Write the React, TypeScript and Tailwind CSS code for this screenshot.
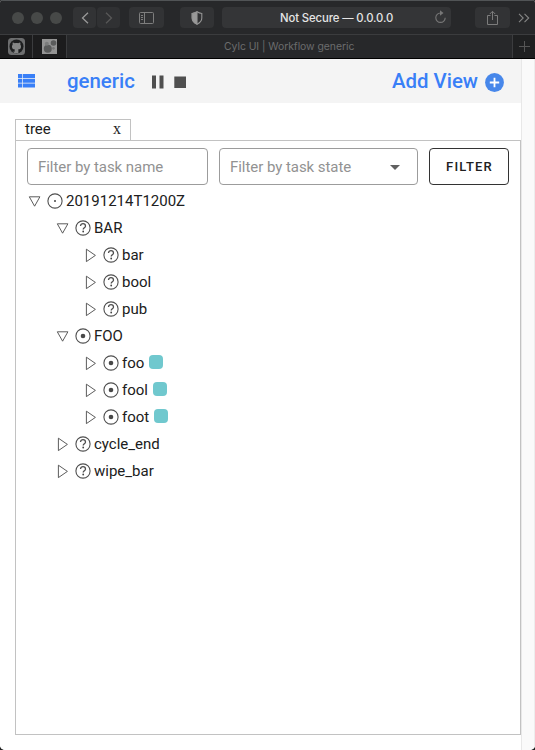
import React from "react";

type Status = "waiting" | "unknown" | "active";

interface TreeNode {
  label: string;
  status: Status;
  depth: number;
  open?: boolean;
  job?: boolean;
}

const nodes: TreeNode[] = [
  { label: "20191214T1200Z", status: "waiting", depth: 0, open: true },
  { label: "BAR", status: "unknown", depth: 1, open: true },
  { label: "bar", status: "unknown", depth: 2 },
  { label: "bool", status: "unknown", depth: 2 },
  { label: "pub", status: "unknown", depth: 2 },
  { label: "FOO", status: "active", depth: 1, open: true },
  { label: "foo", status: "active", depth: 2, job: true },
  { label: "fool", status: "active", depth: 2, job: true },
  { label: "foot", status: "active", depth: 2, job: true },
  { label: "cycle_end", status: "unknown", depth: 1 },
  { label: "wipe_bar", status: "unknown", depth: 1 },
];

const indent = ["pl-[12px]", "pl-[40px]", "pl-[68px]"];

function Arrow({ open }: { open?: boolean }) {
  return (
    <svg className="mt-px h-[15px] w-[14px] shrink-0" viewBox="0 0 14 15" fill="none" stroke="#4a4a4a" strokeWidth="0.9">
      {open ? <path d="M1.300 2.800h10.600L6.600 12.200z" /> : <path d="M2.400 1.200v12.400L11.400 7.400z" />}
    </svg>
  );
}

function StatusIcon({ status }: { status: Status }) {
  return (
    <svg className="ml-[5px] h-4 w-4 shrink-0" viewBox="0 0 16 16" fill="none" stroke="#505050" strokeWidth="1.1">
      <circle cx="8" cy="8" r="7.1" />
      {status === "waiting" && <circle cx="8" cy="8" r="1" fill="#444" stroke="none" />}
      {status === "active" && <circle cx="8" cy="8" r="2.300" fill="#484848" stroke="none" />}
      {status === "unknown" && (
        <>
          <path d="M5.500 6c0-3.200 5-3.100 5-.1 0 1.800-2.300 1.900-2.300 3.600" strokeWidth="1.300" />
          <circle cx="8.200" cy="11.500" r="0.900" fill="#444" stroke="none" />
        </>
      )}
    </svg>
  );
}

function BrowserBar() {
  return (
    <header className="shrink-0 bg-[#27282a] text-[#8a8a8a]">
      <div className="flex h-[34px] items-center border-t border-[#515456]">
        <div className="ml-3 flex gap-[7px]">
          <i className="size-[12px] rounded-full bg-[#474948]" />
          <i className="size-[12px] rounded-full bg-[#474948]" />
          <i className="size-[12px] rounded-full bg-[#474948]" />
        </div>
        <div className="ml-[11px] flex gap-px">
          <span className="flex h-[21px] w-[23px] items-center justify-center rounded-[4px] bg-[#323335]">
            <svg width="8" height="12" viewBox="0 0 8 12" fill="none" stroke="#999" strokeWidth="1.300"><path d="M7 .7L1.500 6 7 11.300" /></svg>
          </span>
          <span className="flex h-[21px] w-[23px] items-center justify-center rounded-[4px] bg-[#303133]">
            <svg width="8" height="12" viewBox="0 0 8 12" fill="none" stroke="#585858" strokeWidth="1.300"><path d="M1 .7L6.500 6 1 11.300" /></svg>
          </span>
        </div>
        <span className="ml-[9px] flex h-[21px] w-[35px] items-center justify-center rounded-[4px] bg-[#323335]">
          <svg width="15" height="12" viewBox="0 0 15 12" fill="none" stroke="#7e7e7e"><rect x=".5" y=".5" width="14" height="11" rx="1" /><path d="M5.500 1v10M2 3.500h2M2 5.500h2M2 7.500h2" /></svg>
        </span>
        <span className="ml-4 flex h-[21px] w-[34px] items-center justify-center rounded-[4px] bg-[#323335]">
          <svg width="12" height="14" viewBox="0 0 12 14" fill="none" stroke="#959595" strokeWidth="1.100"><path d="M6 .8c1.600 1 3 1.500 4.800 1.700V7c0 3-2 4.900-4.800 6.200C3.200 11.900 1.200 10 1.200 7V2.500C3 2.300 4.400 1.800 6 .8z" /><path d="M6 1v12C3.200 11.700 1.200 10 1.200 7V2.500C3 2.300 4.400 1.800 6 1z" fill="#999" /></svg>
        </span>
        <div className="ml-[8px] flex h-[21px] w-[229px] items-center rounded-[4px] bg-[#343537] pl-[58px] text-[#e5e5e5]">
          <span className="mt-[2px] w-[114px] whitespace-nowrap font-['Inter',sans-serif] text-[11.300px] leading-none font-medium tracking-[-0.100px]">Not Secure — 0.0.0.0</span>
          <svg className="mb-[2px] ml-[40px]" width="13" height="14" viewBox="0 0 13 14" fill="none" stroke="#777" strokeWidth="1.100"><path d="M6.500 3A4.700 4.700 0 1 0 11.200 7.700" /><path d="M6 .3L9.500 3 6 5.700z" fill="#777" stroke="none" /></svg>
        </div>
        <span className="ml-[24px] flex h-[21px] w-[35px] items-center justify-center rounded-[4px] bg-[#323335]">
          <svg width="13" height="16" viewBox="0 0 13 16" fill="none" stroke="#7c7c7c"><path d="M4.500 5.500h-3v9h10v-9h-3M6.500 10V1.500M3.800 4L6.500 1.300 9.200 4" /></svg>
        </span>
        <svg className="ml-[8px]" width="12" height="10" viewBox="0 0 12 10" fill="none" stroke="#858585" strokeWidth="1.100"><path d="M1 .8L5.200 5 1 9.200M6.500.8L10.700 5l-4.200 4.200" /></svg>
      </div>
      <div className="flex h-[25px] items-stretch border-t border-b border-t-[#3b3c3e] border-b-black">
        <div className="flex w-[33px] items-center justify-center border-r border-[#3b3c3e] bg-[#1c1c1d]">
          <svg width="17" height="17" viewBox="0 0 17 17"><rect width="17" height="17" rx="3.500" fill="#6d6e6f" /><circle cx="8.500" cy="8.500" r="7" fill="#1d1e1f" /><path d="M6.600 15.200v-1.500c-2 .4-2.500-.8-3.100-1.400M10.400 15.200v-2.400c0-.6-.1-.9-.4-1.200 2.300-.3 3-1.400 3-3.200 0-.8-.3-1.500-.7-2 .2-.6.200-1.300-.1-1.900-.8 0-1.500.5-2 .8-1.100-.3-2.300-.3-3.400 0-.5-.3-1.200-.8-2-.8-.3.600-.3 1.300-.1 1.900-.4.500-.7 1.200-.7 2 0 1.800.8 2.900 3 3.200-.3.300-.4.700-.4 1.200v2.400z" fill="#858686" /></svg>
        </div>
        <div className="flex w-[34px] items-center justify-center border-r border-[#3b3c3e] bg-[#1c1c1d]">
          <svg width="15" height="15" viewBox="0 0 15 15"><path fill="#949494" d="M0 0h15v15H0z" /><circle cx="5.800" cy="9.800" r="4" fill="#5a5b5b" /><circle cx="11.500" cy="4" r="2.800" fill="#5a5b5b" /><circle cx="4.800" cy="4.800" r="2" fill="#7b7c7c" /><circle cx="11.400" cy="9.300" r="1.400" fill="#777" /></svg>
        </div>
        <div className="flex flex-1 items-center pl-[157px] font-['Inter',sans-serif] text-[10.400px] leading-none tracking-[-0.040px] text-[#6b6c6d]">
          <span className="mt-px whitespace-nowrap">Cylc UI | Workflow generic</span>
        </div>
        <div className="flex w-[23px] items-center justify-center border-l border-[#3b3c3e] bg-[#1f2021]">
          <svg width="11" height="11" viewBox="0 0 11 11" stroke="#555"><path d="M5.500 0v11M0 5.500h11" /></svg>
        </div>
      </div>
    </header>
  );
}

export default function App() {
  return (
    <div className="h-[750px] w-[535px] overflow-hidden bg-[#222]">
      <div className="flex h-full flex-col overflow-hidden rounded-t-[3px] rounded-b-[5px] bg-white font-['Roboto',sans-serif]">
        <BrowserBar />
        <div className="flex min-h-0 flex-1">
          <main className="flex min-w-0 flex-1 flex-col bg-white">
            <div className="flex h-[44px] shrink-0 items-center bg-[#f4f4f4] text-[20.400px] leading-none font-medium text-[#397ff7]">
              <svg className="ml-[18px]" width="17" height="14" viewBox="0 0 17 14" fill="currentColor"><path d="M0 0h4v4H0zM4.700 0H17v4H4.700zM0 4.800h4v4H0zM4.700 4.800H17v4H4.700zM0 9.600h4v4H0zM4.700 9.600H17v4H4.700z" /></svg>
              <span className="ml-[32px] w-[68px] whitespace-nowrap">generic</span>
              <svg className="ml-[17px] mt-[2px]" width="34" height="14" viewBox="0 0 34 14" fill="#4f4f4f"><path d="M0 .5h4v13H0zM7.500 .5h4v13h-4zM22.300 1.500H34V13H22.300z" /></svg>
              <span className="ml-[206px] w-[86px] whitespace-nowrap">Add View</span>
              <svg className="mt-[3px] ml-[7px]" width="19" height="19" viewBox="0 0 19 19"><circle cx="9.500" cy="9.500" r="9.400" fill="#4787ea" /><path d="M9.500 4.800v9.400M4.800 9.500h9.400" stroke="white" strokeWidth="1.800" /></svg>
            </div>
            <div className="mt-4 ml-[15px] flex h-[21px] w-[116px] shrink-0 items-center justify-between border border-b-0 border-[#c2c2c2] px-[9px] text-[15px] leading-none text-[#202020]">
              <span className="mb-px">tree</span><span className="mb-[2px] font-['Liberation_Serif',serif] text-[16px]">x</span>
            </div>
            <section className="mb-[15px] ml-[15px] flex min-h-0 flex-1 flex-col border border-[#c2c2c2]">
              <div className="mt-[7px] ml-[11px] flex h-[37px] shrink-0 gap-[11px] whitespace-nowrap">
                <div className="flex w-[181px] items-center rounded-[4px] border border-[#9c9c9c] pt-px pl-[10px] text-[15px] tracking-[-0.050px] text-[#929292]">
                  <span>Filter by task name</span>
                </div>
                <div className="flex w-[199px] items-center rounded-[4px] border border-[#9c9c9c] pt-px pl-[10px] text-[15px] tracking-[-0.050px] text-[#929292]">
                  <span className="w-[122px]">Filter by task state</span>
                  <svg className="ml-[38px]" width="10" height="5" viewBox="0 0 10 5"><path fill="#606060" d="M0 0h10L5 5z" /></svg>
                </div>
                <button className="flex w-[80px] items-center justify-center rounded-[4px] border border-[#333] pl-px text-[13px] font-medium tracking-[1.200px] text-[#202020]">
                  FILTER
                </button>
              </div>
              <div className="mt-[2px] text-[15px] leading-none text-[#202020]">
                {nodes.map((node) => (
                  <div key={node.label} className={`${indent[node.depth]} flex h-[27px] items-center`}>
                    <Arrow open={node.open} />
                    <StatusIcon status={node.status} />
                    <span className="mt-[2px] ml-[3px] whitespace-nowrap">{node.label}</span>
                    {node.job && <span className="mb-px ml-[5px] size-[14px] rounded-[4px] bg-[#70c8ce]" />}
                  </div>
                ))}
              </div>
            </section>
          </main>
          <aside className="w-[14px] border-x border-l-[#e8e8e8] border-r-[#ededed] bg-[#fafafa]" />
        </div>
      </div>
    </div>
  );
}
